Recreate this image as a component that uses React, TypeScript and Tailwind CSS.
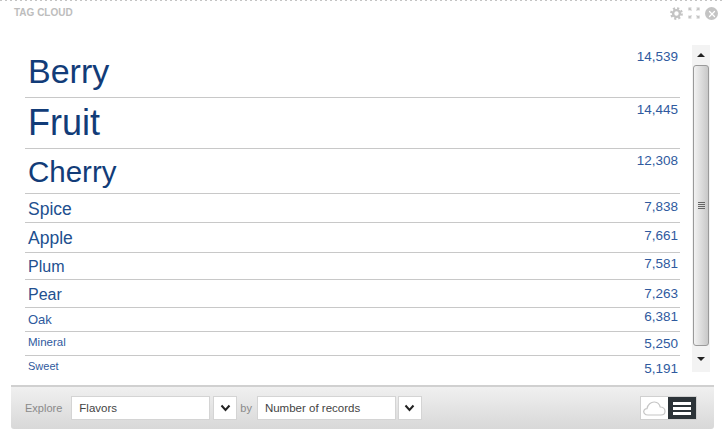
import { X } from "lucide-react";

const rows = [
  { name: "Berry", count: "14,539", height: "h-[52px]", size: "text-[34px]", color: "text-[#123c78]", pad: "pt-[5px]", countTop: "mt-[3px]" },
  { name: "Fruit", count: "14,445", height: "h-[51px]", size: "text-[36px]", color: "text-[#123c78]", pad: "pt-[3px]", countTop: "mt-[4px]" },
  { name: "Cherry", count: "12,308", height: "h-[45px]", size: "text-[29.5px]", color: "text-[#123c78]", pad: "pt-[5px]", countTop: "mt-[4px]" },
  { name: "Spice", count: "7,838", height: "h-[29px]", size: "text-[17.5px]", color: "text-[#22508f]", pad: "pt-[5px]", countTop: "mt-[5px]" },
  { name: "Apple", count: "7,661", height: "h-[30px]", size: "text-[17.5px]", color: "text-[#22508f]", pad: "pt-[5px]", countTop: "mt-[5px]" },
  { name: "Plum", count: "7,581", height: "h-[27px]", size: "text-[16px]", color: "text-[#22508f]", pad: "pt-[4px]", countTop: "mt-[3px]" },
  { name: "Pear", count: "7,263", height: "h-[28px]", size: "text-[16px]", color: "text-[#22508f]", pad: "pt-[5px]", countTop: "mt-[6px]" },
  { name: "Oak", count: "6,381", height: "h-[24px]", size: "text-[13px]", color: "text-[#2f5a9e]", pad: "pt-[4px]", countTop: "mt-[1px]" },
  { name: "Mineral", count: "5,250", height: "h-[24px]", size: "text-[11.5px]", color: "text-[#2f5a9e]", pad: "pt-[4px]", countTop: "mt-[4px]" },
  { name: "Sweet", count: "5,191", height: "h-[24px]", size: "text-[11px]", color: "text-[#2f5a9e]", pad: "pt-[4px]", countTop: "mt-[5px]" },
];

function Chevron() {
  return (
    <svg width="11" height="8" viewBox="0 0 11 8" fill="none">
      <path d="M1.5 1.5 L5.5 6 L9.5 1.5" stroke="#222" strokeWidth="2" />
    </svg>
  );
}

function Select({ label, width, gap }: { label: string; width: string; gap: string }) {
  return (
    <div className={`flex ${gap}`}>
      <div className={`${width} h-[24px] bg-white border border-[#d4d4d4] flex items-center pl-[7px] pt-[1px] text-[11.5px] text-[#444]`}>
        {label}
      </div>
      <div className="w-[24px] h-[24px] bg-white border border-[#d4d4d4] flex items-center justify-center">
        <Chevron />
      </div>
    </div>
  );
}

function Scrollbar() {
  return (
    <div className="w-[18px] h-[327px] bg-[#f3f3f3] flex flex-col">
      <div className="h-[20px] flex items-center justify-center">
        <div className="w-0 h-0 border-x-[4px] border-x-transparent border-b-[4px] border-b-[#222]" />
      </div>
      <div className="h-[281px] mx-[1px] rounded-[3px] border border-[#9a9a9a] bg-gradient-to-r from-[#f2f2f2] to-[#c8c8c8] flex items-center justify-center">
        <div className="w-[7px] flex flex-col gap-[1px]">
          <div className="h-[1px] bg-[#666]" />
          <div className="h-[1px] bg-[#666]" />
          <div className="h-[1px] bg-[#666]" />
          <div className="h-[1px] bg-[#666]" />
        </div>
      </div>
      <div className="flex-1 flex items-center justify-center">
        <div className="w-0 h-0 border-x-[4px] border-x-transparent border-t-[4px] border-t-[#222]" />
      </div>
    </div>
  );
}

export default function App() {
  return (
    <div className="w-[725px] h-[436px] bg-white overflow-hidden font-['Liberation_Sans',Arial,sans-serif]">
      {/* dotted top edge */}
      <div className="h-[1px] bg-[repeating-linear-gradient(90deg,#c4c4c4_0_2px,transparent_2px_5px)]" />
      <div className="h-[44px] flex justify-between pl-[14px] pr-[7px] pt-[6px]">
        <div className="text-[10px] leading-[12px] font-bold text-[#bdbdbd]">TAG CLOUD</div>
        <div className="flex items-start gap-[5px] h-[14px]">
          <svg width="13" height="13" viewBox="0 0 13 13" fill="none" stroke="#c4c4c4">
            <circle cx="6.5" cy="6.5" r="3.4" strokeWidth="2.4" />
            <circle cx="6.5" cy="6.5" r="5.2" strokeWidth="2.4" strokeDasharray="2.1 1.98" />
          </svg>
          <svg width="12" height="12" viewBox="0 0 12 12" fill="none" stroke="#c4c4c4" strokeWidth="1.2">
            <path d="M1 3.5V1H3.5M1 1L3.5 3.5M8.5 1H11V3.5M11 1L8.5 3.5M11 8.5V11H8.5M11 11L8.5 8.5M3.5 11H1V8.5M1 11L3.5 8.5" />
          </svg>
          <div className="w-[13px] h-[13px] rounded-full bg-[#c4c4c4] flex items-center justify-center">
            <X size={10} className="text-white" strokeWidth={3} />
          </div>
        </div>
      </div>

      <div className="flex pl-[25px] h-[340px]">
        <div className="w-[655px] pt-[1px]">
          {rows.map((row, i) => (
            <div
              key={row.name}
              className={`${row.height} flex justify-between items-start pl-[3px] pr-[2px] ${i < rows.length - 1 ? "border-b border-[#c8c8c8]" : ""}`}
            >
              <span className={`${row.size} ${row.pad} ${row.color} leading-[1.2]`}>{row.name}</span>
              <span className={`${row.countTop} text-[13.5px] leading-[16px] text-[#2f5a9e]`}>{row.count}</span>
            </div>
          ))}
        </div>
        <div className="ml-[12px]">
          <Scrollbar />
        </div>
      </div>

      <div className="mx-[11px] h-[44px] rounded-b-[3px] border-t-2 border-[#d0d0d0] bg-gradient-to-b from-[#f0f0f0] to-[#d8d8d8] flex items-center pl-[14px] pr-[17px]">
        <span className="text-[11px] text-[#8a8a8a] mr-[9px]">Explore</span>
        <Select label="Flavors" width="w-[139px]" gap="gap-[3px]" />
        <span className="text-[11px] text-[#8a8a8a] ml-[3px] mr-[5px]">by</span>
        <Select label="Number of records" width="w-[139px]" gap="gap-[2px]" />
        <div className="ml-auto flex h-[24px] border border-[#d0d0d0]">
          <div className="w-[27px] bg-white flex items-center justify-center">
            <svg width="23" height="15" viewBox="0 0 23 15" fill="none" stroke="#c6c6c6" strokeWidth="1.2">
              <path d="M5 14 C1.5 14 0.6 11.5 0.8 10.2 C1 8.4 2.6 7.4 4 7.6 C4.6 3.6 8 0.8 11.5 1 C14.6 1.2 16.6 3.4 17.2 6 C20 6 22 8 22 10.2 C22 12.6 20.2 14 18 14 Z" />
            </svg>
          </div>
          <div className="w-[28px] bg-[#2c3338] flex flex-col items-center justify-center gap-[2px]">
            <div className="w-[18px] h-[3px] bg-white" />
            <div className="w-[18px] h-[3px] bg-white" />
            <div className="w-[18px] h-[3px] bg-white" />
          </div>
        </div>
      </div>
    </div>
  );
}
